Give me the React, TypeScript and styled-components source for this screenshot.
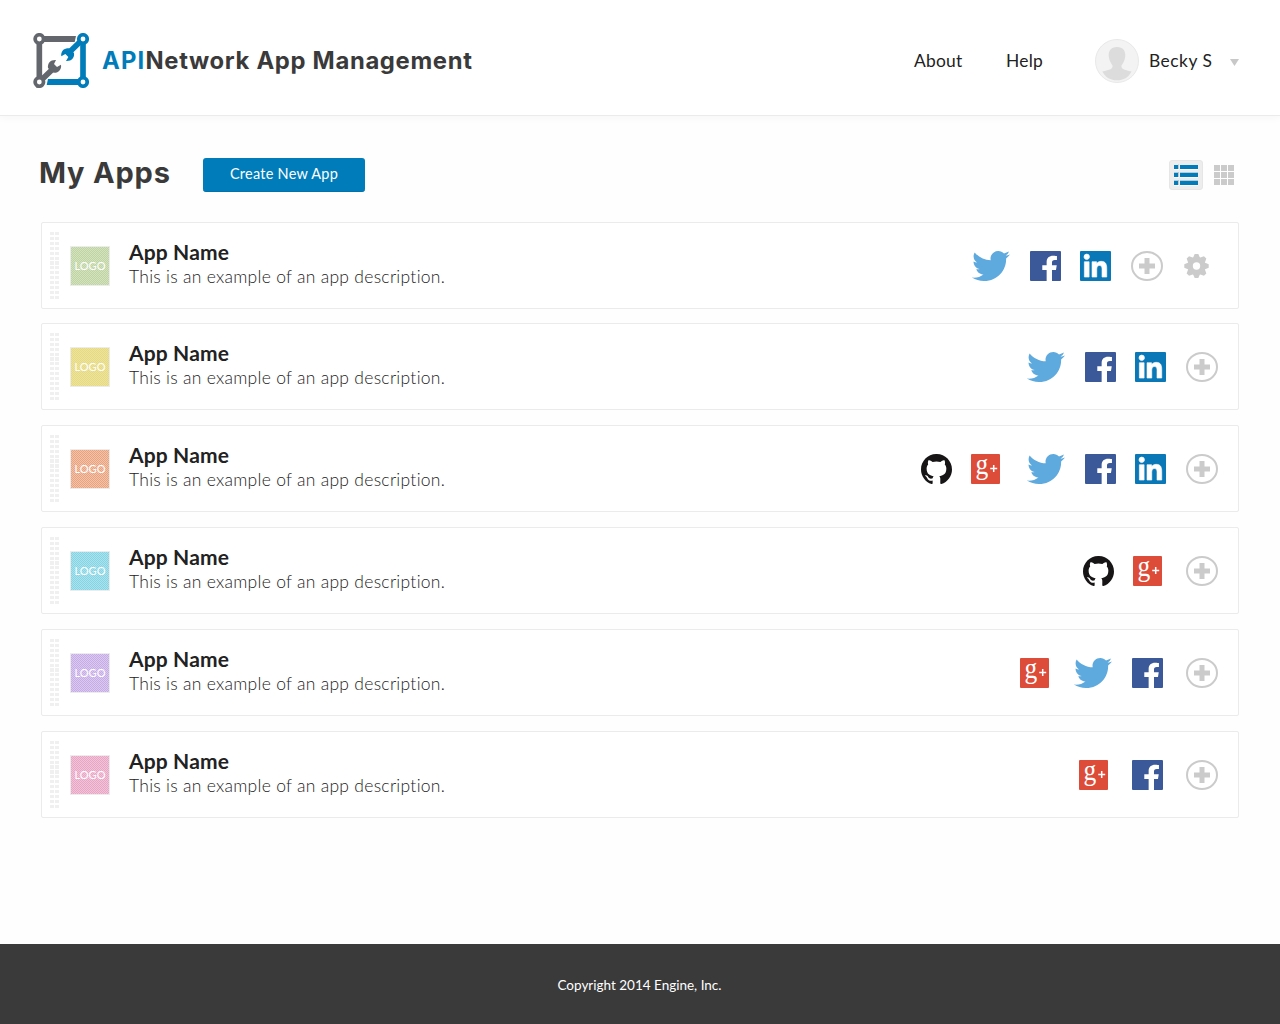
import React from "react";
import styled, { createGlobalStyle } from "styled-components";
import { FaTwitter, FaFacebookF, FaLinkedinIn } from "react-icons/fa";
import { SiGithub } from "react-icons/si";

const GlobalStyle = createGlobalStyle`
  * { box-sizing: border-box; }
  body {
    margin: 0;
    background: #fefefe;
    font-family: Lato, "Open Sans", sans-serif;
    color: #222;
  }
  h1, h2, h3, p { margin: 0; }
`;

const Page = styled.div`
  display: flex;
  flex-direction: column;
  width: 1280px;
  height: 1024px;
`;

const Header = styled.header`
  display: flex;
  align-items: center;
  flex: none;
  height: 116px;
  padding: 0 40px 0 33px;
  background: #fff;
  border-bottom: 1px solid #ebebeb;
  box-shadow: 0 2px 8px rgba(0, 0, 0, 0.035);
`;

const Brand = styled.div`
  display: flex;
  align-items: center;
  width: 881px;
  margin-top: 6px;
`;

const BrandName = styled.h1`
  margin-left: 13px;
  font: 700 23.8px/30px Inter, sans-serif;
  letter-spacing: 0.68px;
  color: #3a3a3a;
  white-space: nowrap;
  em {
    font-style: normal;
    letter-spacing: 1.2px;
    color: #007cba;
  }
`;

const NavLink = styled.a<{ $width: number }>`
  width: ${(p) => p.$width}px;
  margin-top: 6px;
  font-size: 17.4px;
  line-height: 24px;
  letter-spacing: 0.25px;
  color: #222;
  white-space: nowrap;
`;

const User = styled.div`
  display: flex;
  align-items: center;
  margin-top: 6px;
  svg { flex: none; }
`;

const UserName = styled.span`
  width: 81px;
  margin-left: 10px;
  font-size: 17.4px;
  line-height: 24px;
  letter-spacing: 0.5px;
  white-space: nowrap;
`;

const Main = styled.main`
  flex: 1;
  padding: 42px 41px 0;
`;

const Toolbar = styled.div`
  display: flex;
  align-items: center;
  height: 34px;
  margin-bottom: 30px;
`;

const Heading = styled.h2`
  width: 164px;
  margin-left: -2px;
  margin-top: -4px;
  font: 700 29px/34px Inter, sans-serif;
  letter-spacing: 0.8px;
  color: #3a3a3a;
  white-space: nowrap;
`;

const CreateButton = styled.button`
  width: 162px;
  height: 34px;
  padding: 0 0 1px;
  border: 0;
  border-bottom: 1px solid #0073ad;
  border-radius: 3px;
  background: #007cba;
  color: #fff;
  font: 400 14.5px/20px Lato, sans-serif;
  letter-spacing: 0.25px;
`;

const Views = styled.div`
  display: flex;
  align-items: center;
  margin-left: auto;
  margin-right: 5px;
  gap: 11px;
`;

const ListView = styled.div`
  display: grid;
  grid-template-columns: 5px 18px;
  grid-auto-rows: 5px;
  gap: 3px 1px;
  width: 34px;
  height: 30px;
  padding-bottom: 1px;
  border: 1px solid #e6e6e6;
  border-radius: 3px;
  background: #ededed;
  align-content: center;
  justify-content: center;
  i {
    border-top: 1px solid #b3ccd9;
    background: #007cba;
    box-shadow: 0 1px 0 #fff;
  }
  i:nth-child(-n + 2) { border-top-color: #ededed; }
  i:nth-child(odd) { border-right: 1px solid #b3ccd9; }
`;

const GridView = styled.div`
  display: grid;
  grid-template-columns: repeat(3, 6px);
  grid-auto-rows: 6px;
  gap: 1px;
  i { background: #cbcbcb; }
`;

const List = styled.div`
  display: flex;
  flex-direction: column;
  gap: 15px;
`;

const Row = styled.section`
  display: flex;
  align-items: center;
  height: 87px;
  padding: 0 20px 0 8px;
  border: 1px solid #ebebeb;
  border-radius: 2px;
  background: #fff;
  &:first-child { margin-bottom: -1px; }
`;

const Handle = styled.div`
  display: flex;
  gap: 1px;
  width: 9px;
  height: 67px;
  i {
    flex: 1;
    background: repeating-linear-gradient(#f0f0f0 0 3.1px, #fff 3.1px 4.9px);
  }
`;

const LogoTile = styled.div<{ $dark: string; $light: string }>`
  display: flex;
  align-items: center;
  justify-content: center;
  width: 40px;
  height: 40px;
  margin: 1px 0 0 11px;
  border: 1px solid #ececec;
  background: repeating-conic-gradient(${(p) => p.$dark} 0 25%, ${(p) => p.$light} 0 50%) 0 0 / 2px 2px;
  color: #fff;
  font-size: 11px;
  line-height: 12px;
`;

const Details = styled.div`
  flex: 1;
  margin: -4px 0 0 19px;
`;

const AppName = styled.h3`
  font-size: 21px;
  line-height: 25px;
  font-weight: 700;
  letter-spacing: 0.15px;
  color: #222;
`;

const Description = styled.p`
  font-size: 17.5px;
  line-height: 25px;
  font-weight: 300;
  letter-spacing: 0.28px;
  color: #222;
`;

const Services = styled.div<{ $end: number }>`
  display: flex;
  align-items: center;
  margin-right: ${(p) => p.$end}px;
`;

const Slot = styled.span<{ $gap: number }>`
  display: flex;
  margin-right: ${(p) => p.$gap}px;
`;

const Tile = styled.span<{ $color: string; $width: number }>`
  display: flex;
  justify-content: center;
  width: ${(p) => p.$width}px;
  height: 30px;
  border-radius: 1px;
  background: ${(p) => p.$color};
  color: #fff;
  svg { overflow: visible; }
`;

const Footer = styled.footer`
  display: flex;
  align-items: center;
  justify-content: center;
  flex: none;
  height: 80px;
  padding: 2px 1px 0 0;
  background: #3a3a3a;
  color: #fff;
  font-size: 13.5px;
`;

const BrandMark = () => (
  <svg width="56" height="55" viewBox="39 39 168 165">
    <g fill="none" stroke="#63666d" strokeWidth="17">
      <path d="M58 57V186L96 149" />
    </g>
    <path d="M58 48H168L164 66H58Z" fill="#63666d" />
    <path d="M84 144C82 130 91 119 108 120L102 132L111 141L123 134C126 150 111 162 97 157Z" fill="#63666d" />
    <path d="M189 57V186" stroke="#007cba" strokeWidth="17" />
    <path d="M84 177H189V195H80Z" fill="#007cba" />
    <path d="M189 57L151 94" stroke="#007cba" strokeWidth="17" />
    <path d="M162 99C164 113 155 124 138 123L145 111L136 102L124 109C121 93 136 81 149 86Z" fill="#007cba" />
    {[[58, 57], [58, 186]].map(([x, y]) => (
      <circle key={y} cx={x} cy={y} r="12.700" fill="#fff" stroke="#63666d" strokeWidth="11" />
    ))}
    {[[189, 57], [189, 186]].map(([x, y]) => (
      <circle key={y} cx={x} cy={y} r="12.700" fill="#fff" stroke="#007cba" strokeWidth="11" />
    ))}
  </svg>
);

const Avatar = () => (
  <svg width="44" height="44" viewBox="0 0 44 44">
    <circle cx="22" cy="22" r="21.5" fill="#f3f3f3" stroke="#e8e8e8" />
    <path
      d="M22 8C16 8 13 12 13.8 18C14.3 21.500 16 24.500 17.500 26.500C18 30 15 30.800 7.300 32.500C10.500 38.500 15.500 41.300 22 41.300S33.500 38.500 36.500 32.500C29 30.800 26 30 26.500 26.500C28 24.500 29.700 21.500 30.200 18C31 12 28 8 22 8Z"
      fill="#dcdcdc"
    />
  </svg>
);

const Caret = () => (
  <svg width="9" height="11" viewBox="0 0 9 11"><path d="M0 4H9L4.500 11Z" fill="#c8c8c8" /></svg>
);

const PlusIcon = () => (
  <svg width="32" height="30" viewBox="0 0 32 30">
    <ellipse cx="16" cy="15" rx="15" ry="14" fill="none" stroke="#cbcbcb" strokeWidth="2" />
    <path d="M16 7V23M8 15H24" stroke="#cbcbcb" strokeWidth="5" />
  </svg>
);

const GearIcon = () => (
  <svg width="25" height="24" viewBox="-12.5 -12 25 24">
    {[0, 45, 90, 135].map((a) => (
      <path key={a} d="M-3.600 -8L-1.700 -12.200H1.700L3.600 -8V8L1.700 12.200H-1.700L-3.600 8Z" fill="#cbcbcb" transform={`rotate(${a})`} />
    ))}
    <circle r="9" fill="#cbcbcb" />
    <circle r="3.700" fill="#fff" />
  </svg>
);

type Service = "github" | "google" | "twitter" | "facebook" | "linkedin" | "plus" | "gear";

const ServiceIcon = ({ name }: { name: Service }) => {
  switch (name) {
    case "github":
      return <SiGithub viewBox="0 0.3 24 23.4" preserveAspectRatio="none" style={{ width: 31, height: 30 }} color="#171515" />;
    case "google":
      return (
        <Tile $color="#dd4b39" $width={29}>
          <svg width="29" height="30" viewBox="0 0 29 30">
            <text transform="translate(4.500 20.200) scale(0.88 1)" fontFamily="Liberation Serif, serif" fontSize="29" fill="#fff">g</text>
            <path d="M22.700 11V18M19.200 14.500H26.200" stroke="#fff" strokeWidth="1.500" />
          </svg>
        </Tile>
      );
    case "twitter":
      return <FaTwitter width={38} height={30} viewBox="0 48 512 416" preserveAspectRatio="none" style={{ width: 38, height: 30 }} color="#5ea9dd" />;
    case "facebook":
      return (
        <Tile $color="#3b5998" $width={31}>
          <FaFacebookF viewBox="-207 -95 580 607" preserveAspectRatio="none" style={{ width: 31, height: 30 }} />
        </Tile>
      );
    case "linkedin":
      return (
        <Tile $color="#0a77b7" $width={31}>
          <FaLinkedinIn viewBox="-79 -60 611 585" preserveAspectRatio="none" style={{ width: 31, height: 30 }} stroke="#fff" strokeWidth="12" />
        </Tile>
      );
    case "plus":
      return <PlusIcon />;
    default:
      return <GearIcon />;
  }
};

type AppEntry = { dark: string; light: string; end: number; services: [Service, number][] };

const apps: AppEntry[] = [
  { dark: "#bcd69b", light: "#d6e0c6", end: 9, services: [["twitter", 20], ["facebook", 19], ["linkedin", 20], ["plus", 21], ["gear", 0]] },
  { dark: "#e8da78", light: "#ebe3a6", end: 0, services: [["twitter", 20], ["facebook", 19], ["linkedin", 20], ["plus", 0]] },
  { dark: "#eda079", light: "#edc4ae", end: 0, services: [["github", 19], ["google", 27], ["twitter", 20], ["facebook", 19], ["linkedin", 20], ["plus", 0]] },
  { dark: "#80d5e6", light: "#b0e1ea", end: 0, services: [["github", 19], ["google", 24], ["plus", 0]] },
  { dark: "#c6aaeb", light: "#dacbeb", end: 0, services: [["google", 25], ["twitter", 20], ["facebook", 23], ["plus", 0]] },
  { dark: "#eda3c6", light: "#edc6d8", end: 0, services: [["google", 24], ["facebook", 23], ["plus", 0]] },
];

export default function App() {
  return (
    <Page>
      <GlobalStyle />
      <Header>
        <Brand>
          <BrandMark />
          <BrandName><em>API</em>Network App Management</BrandName>
        </Brand>
        <NavLink $width={92}>About</NavLink>
        <NavLink $width={89}>Help</NavLink>
        <User>
          <Avatar />
          <UserName>Becky S</UserName>
          <Caret />
        </User>
      </Header>
      <Main>
        <Toolbar>
          <Heading>My Apps</Heading>
          <CreateButton>Create New App</CreateButton>
          <Views>
            <ListView>{Array.from({ length: 6 }, (_, i) => <i key={i} />)}</ListView>
            <GridView>{Array.from({ length: 9 }, (_, i) => <i key={i} />)}</GridView>
          </Views>
        </Toolbar>
        <List>
          {apps.map((app, i) => (
            <Row key={i}>
              <Handle><i /><i /></Handle>
              <LogoTile $dark={app.dark} $light={app.light}>LOGO</LogoTile>
              <Details>
                <AppName>App Name</AppName>
                <Description>This is an example of an app description.</Description>
              </Details>
              <Services $end={app.end}>
                {app.services.map(([name, gap]) => (
                  <Slot key={name} $gap={gap}><ServiceIcon name={name} /></Slot>
                ))}
              </Services>
            </Row>
          ))}
        </List>
      </Main>
      <Footer>Copyright 2014 Engine, Inc.</Footer>
    </Page>
  );
}
